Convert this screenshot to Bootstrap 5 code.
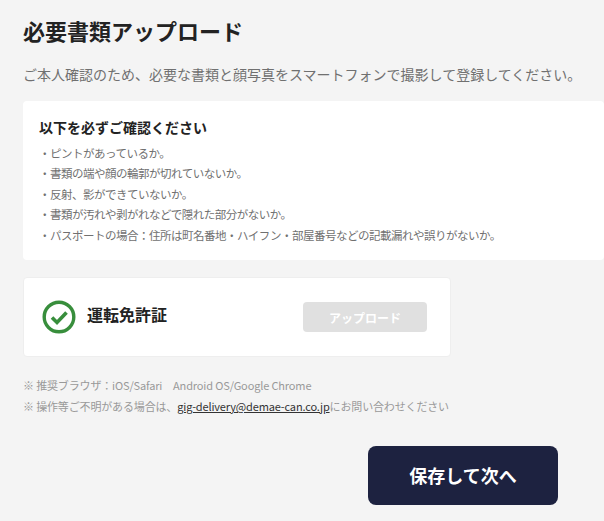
<!doctype html>
<html lang="ja"><head><meta charset="utf-8">
<link href="https://cdn.jsdelivr.net/npm/bootstrap@5.3.0/dist/css/bootstrap.min.css" rel="stylesheet">
<style>
html,body{height:521px;overflow:hidden}
body{background:#f4f4f4;font-family:"Noto Sans CJK JP",sans-serif;color:#212529;width:604px}
.pg{padding:14px 0 0 23px;width:604px}
.ttl{font-size:22px;font-weight:700;line-height:32px;margin:0 0 16px;color:#222}
.sub{font-size:14px;line-height:24px;color:#707070;margin:0 0 15px;white-space:nowrap}
.note{background:#fff;border-radius:4px;padding:15px 16px 16px;height:159px;width:581px}
.note h2{font-size:14px;font-weight:700;line-height:22px;margin:0 0 4.5px;color:#222}
.note ul{font-size:11.5px;letter-spacing:-.5px;line-height:20.5px;color:#707070;white-space:nowrap}
.doc{background:#fff;border:1px solid #eee;border-radius:4px;width:428px;height:80px;padding:0 23px 0 18px;margin:17px 0 0}
.docn{font-size:16px;font-weight:700;color:#222;margin-left:11px;position:relative;top:-3px}
.upb{width:124px;height:30px;background:#e0e0e0;color:#fff;font-size:12px;font-weight:700;border:0;border-radius:4px;padding:2px 0 0;--bs-btn-disabled-opacity:1;--bs-btn-disabled-bg:#e0e0e0;--bs-btn-disabled-color:#fff;--bs-btn-disabled-border-color:#e0e0e0}
.fine{font-size:11px;letter-spacing:-.15px;line-height:21px;color:#999;margin:18px 0 0;white-space:nowrap}
.fine a{color:#333}
.save{width:190px;height:59px;background:#1d2240;color:#fff;font-size:18px;font-weight:700;border-radius:8px;border:0;margin:29px 0 0 345px;display:block;--bs-btn-hover-bg:#1d2240;--bs-btn-hover-color:#fff}
</style></head><body>
<main class="pg">
<h1 class="ttl">必要書類アップロード</h1>
<p class="sub">ご本人確認のため、必要な書類と顔写真をスマートフォンで撮影して登録してください。</p>
<section class="note">
<h2>以下を必ずご確認ください</h2>
<ul class="list-unstyled mb-0">
<li>・ピントがあっているか。</li>
<li>・書類の端や顔の輪郭が切れていないか。</li>
<li>・反射、影ができていないか。</li>
<li>・書類が汚れや剥がれなどで隠れた部分がないか。</li>
<li>・パスポートの場合：住所は町名番地・ハイフン・部屋番号などの記載漏れや誤りがないか。</li>
</ul>
</section>
<section class="doc d-flex align-items-center">
<svg width="34" height="34" viewBox="0 0 34 34" fill="none" stroke="#388e3c"><circle cx="17" cy="17" r="14.8" stroke-width="3.4"/><path d="M10 17.5l5 5 9.5-10" stroke-width="3.6"/></svg>
<span class="docn flex-grow-1">運転免許証</span>
<button class="btn upb" disabled>アップロード</button>
</section>
<p class="fine">※ 推奨ブラウザ：iOS/Safari　Android OS/Google Chrome<br>※ 操作等ご不明がある場合は、<a href="#">gig-delivery@demae-can.co.jp</a>にお問い合わせください</p>
<button class="btn save">保存して次へ</button>
</main>
</body></html>
